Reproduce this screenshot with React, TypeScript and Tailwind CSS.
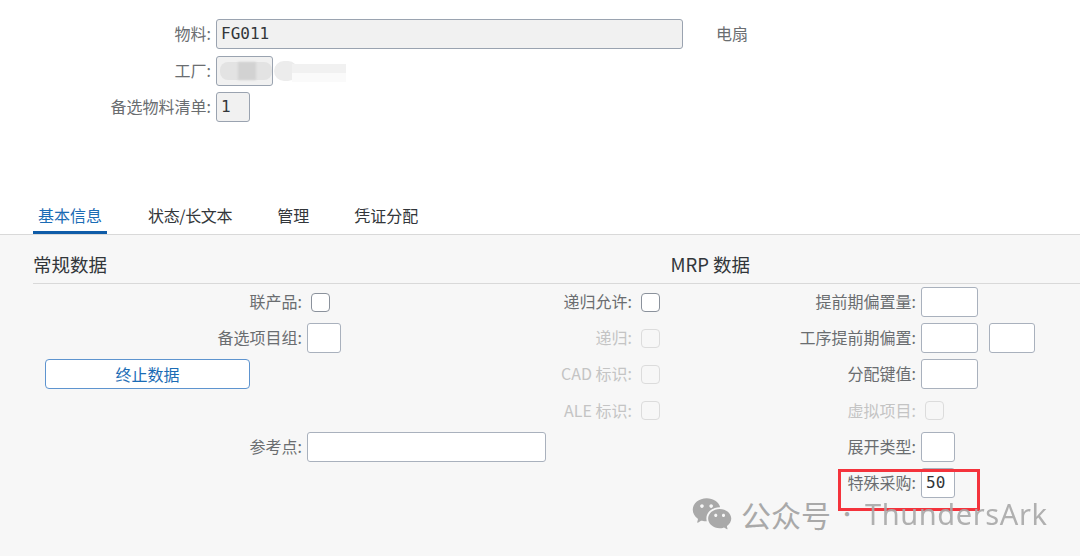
import React from 'react'
import { RiWechatFill } from 'react-icons/ri'

const cjk = '"Noto Sans CJK SC", "Noto Sans", sans-serif'

function FieldLabel({ children, disabled = false }: { children: React.ReactNode; disabled?: boolean }) {
  return (
    <div className={`flex h-[30px] items-center justify-end whitespace-nowrap pb-[2px] text-[16px] ${disabled ? 'text-[#c4c4c4]' : 'text-[#6a6d70]'}`}>
      {children}:
    </div>
  )
}

function TextBox({ value, width, readOnly = false }: { value?: string; width: string; readOnly?: boolean }) {
  return (
    <div
      className={`flex h-[30px] items-center rounded-[3px] border px-[4px] font-['DejaVu_Sans_Mono',monospace] text-[16px] text-[#32363a] ${width} ${
        readOnly ? 'border-[#9aa3b0] bg-[#f1f1f1]' : 'border-[#a9b1bd] bg-white'
      }`}
    >
      {value}
    </div>
  )
}

function CheckBox({ disabled = false }: { disabled?: boolean }) {
  return (
    <div className="flex h-[30px] items-center pl-[4px]">
      <div className={`h-[19px] w-[19px] rounded-[4px] border ${disabled ? 'border-[#dcdcdc] bg-[#f7f7f7]' : 'border-[#8b929c] bg-white'}`} />
    </div>
  )
}

export default function App() {
  return (
    <div className="relative h-[556px] w-[1080px] overflow-hidden bg-white" style={{ fontFamily: cjk }}>
      {/* Header fields */}
      <div className="grid h-[199px] grid-cols-[211px_1fr] content-start gap-x-[5px] gap-y-[6.5px] pt-[19px]">
        <FieldLabel>物料</FieldLabel>
        <div className="flex items-center">
          <TextBox value="FG011" width="w-[467px]" readOnly />
          <span className="ml-[33px] pb-[2px] text-[16px] text-[#6a6d70]">电扇</span>
        </div>

        <FieldLabel>工厂</FieldLabel>
        <div className="relative">
          <TextBox width="w-[57px]" readOnly />
          {/* blurred out plant value */}
          <div className="absolute left-[4px] top-[6px] h-[18px] w-[52px] rounded-[8px] bg-[#e3e3e3]" />
          <div className="absolute left-[22px] top-[6px] h-[18px] w-[18px] bg-[#d2d2d2] blur-[1px]" />
          <div className="absolute left-[58px] top-[5px] h-[20px] w-[24px] rounded-[10px] bg-[#ececec]" />
          <div className="absolute left-[76px] top-[8px] h-[9px] w-[54px] bg-[#f1f1f1]" />
          <div className="absolute left-[76px] top-[17px] h-[9px] w-[54px] bg-[#fafafa]" />
        </div>

        <FieldLabel>备选物料清单</FieldLabel>
        <TextBox value="1" width="w-[34px]" readOnly />
      </div>

      {/* Tabs */}
      <div className="flex h-[35px] items-start pl-[33px] text-[16px] text-[#32363a]">
        <div className="h-[35px] w-[74px] border-b-[3px] border-[#0f5ca8] pt-[4px] text-center leading-[24px] text-[#1b6cb5]">基本信息</div>
        <div className="ml-[41px] pt-[4px] leading-[24px] tracking-[-0.35px]">状态/长文本</div>
        <div className="ml-[45px] pt-[4px] leading-[24px]">管理</div>
        <div className="ml-[45px] pt-[4px] leading-[24px]">凭证分配</div>
      </div>

      {/* Tab panel */}
      <div className="h-[322px] border-t border-[#d9d9d9] bg-[#f7f7f7] pl-[33px]">
        <div className="flex h-[49px] items-center border-b border-[#d9d9d9] pt-[12px] text-[18.5px] text-[#32363a]">
          <div className="w-[637.5px]">常规数据</div>
          <div>MRP 数据</div>
        </div>

        <div className="mt-[3px] grid grid-cols-[269px_243px_77px_58px_216px_126px] gap-x-[5px] gap-y-[6.2px]">
          <FieldLabel>联产品</FieldLabel>
          <CheckBox />
          <FieldLabel>递归允许</FieldLabel>
          <CheckBox />
          <FieldLabel>提前期偏置量</FieldLabel>
          <TextBox width="w-[57px]" />

          <FieldLabel>备选项目组</FieldLabel>
          <TextBox width="w-[34px]" />
          <FieldLabel disabled>递归</FieldLabel>
          <CheckBox disabled />
          <FieldLabel>工序提前期偏置</FieldLabel>
          <div className="flex gap-[11px]">
            <TextBox width="w-[57px]" />
            <TextBox width="w-[46px]" />
          </div>

          <div className="col-span-2 pl-[12px]">
            <div className="flex h-[30px] w-[205px] items-center justify-center rounded-[4px] border border-[#5e94cf] bg-white pb-[1px] text-[16px] text-[#1b6cb5]">
              终止数据
            </div>
          </div>
          <FieldLabel disabled>CAD 标识</FieldLabel>
          <CheckBox disabled />
          <FieldLabel>分配键值</FieldLabel>
          <TextBox width="w-[57px]" />

          <div />
          <div />
          <FieldLabel disabled>ALE 标识</FieldLabel>
          <CheckBox disabled />
          <FieldLabel disabled>虚拟项目</FieldLabel>
          <CheckBox disabled />

          <FieldLabel>参考点</FieldLabel>
          <TextBox width="w-[239px]" />
          <div />
          <div />
          <FieldLabel>展开类型</FieldLabel>
          <TextBox width="w-[34px]" />

          <div />
          <div />
          <div />
          <div />
          <FieldLabel>特殊采购</FieldLabel>
          <TextBox value="50" width="w-[34px]" />
        </div>
      </div>

      {/* Red highlight */}
      <div className="absolute left-[838px] top-[469px] h-[42px] w-[142px] border-[3px] border-[#f4333c]" />

      {/* Watermark */}
      <div className="absolute left-[692px] top-[499px] flex h-[30px] items-center text-[#a9a9a9]">
        <RiWechatFill size={42} className="-ml-[1px]" />
        <span className="ml-[8px] text-[30px] leading-[30px]">公众号</span>
        <span className="ml-[6px] text-[20px] leading-[30px]">·</span>
        <span className="ml-[8px] font-['Noto_Sans',sans-serif] text-[29px] leading-[30px] tracking-[0.6px] opacity-90">ThundersArk</span>
      </div>
    </div>
  )
}
